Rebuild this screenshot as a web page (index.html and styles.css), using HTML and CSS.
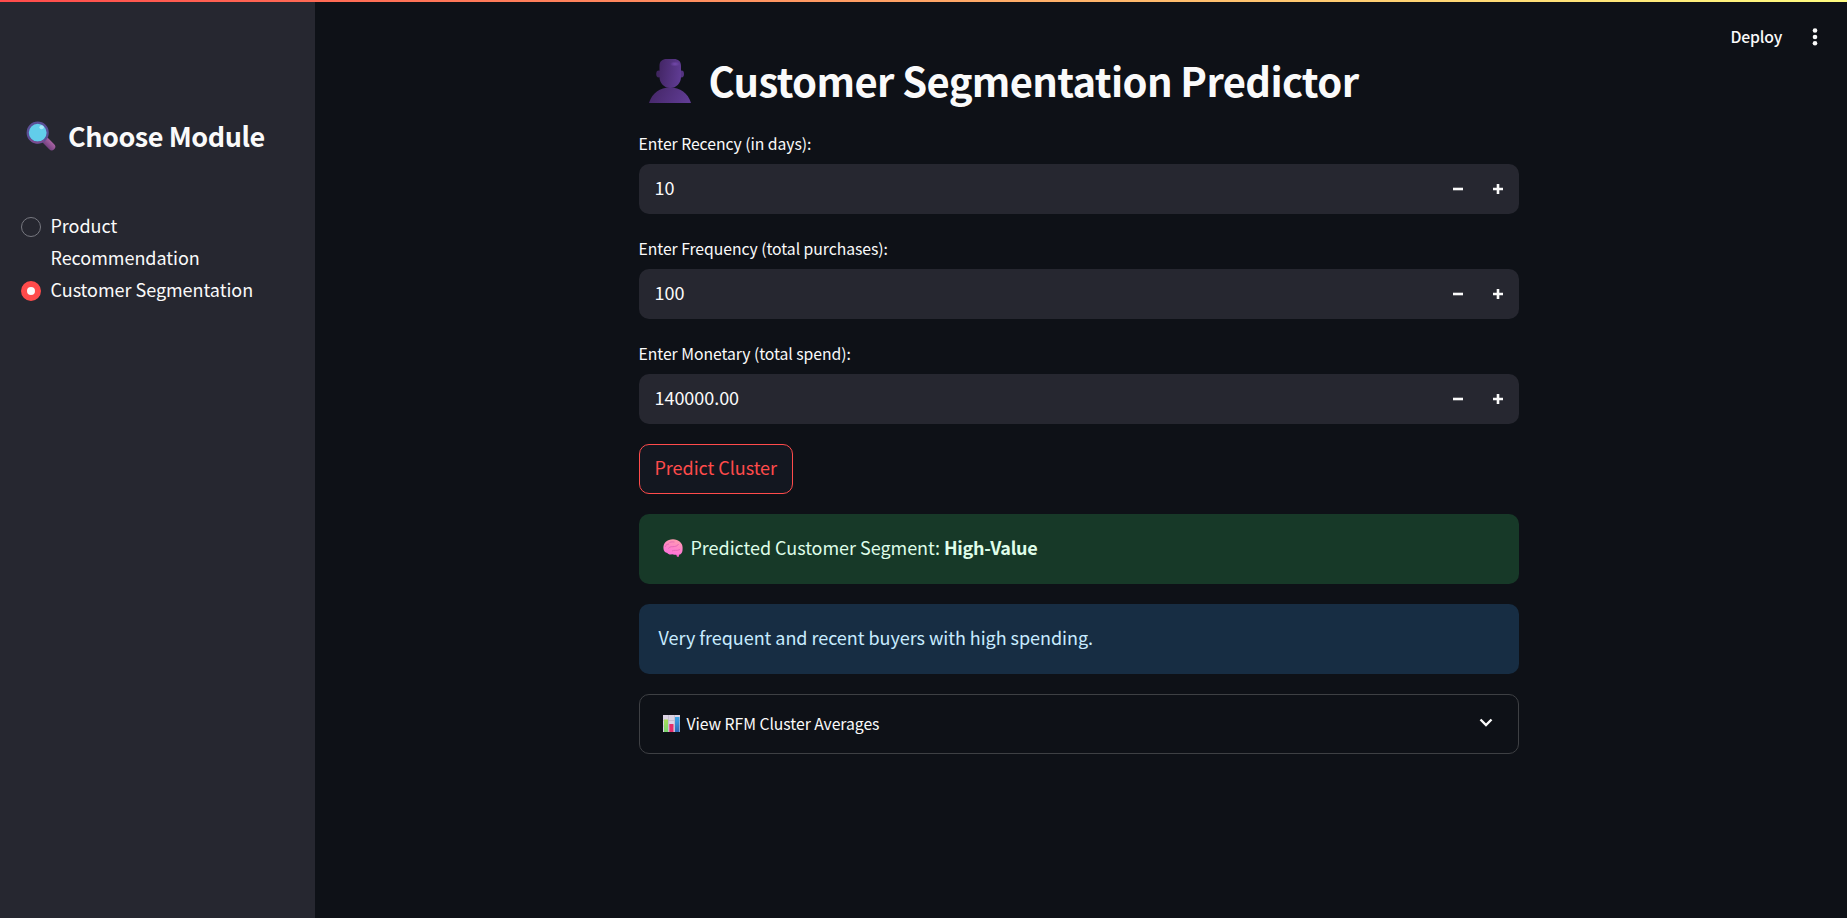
FILE: index.html
```html
<!DOCTYPE html>
<html lang="en">
<head>
<meta charset="utf-8">
<title>Customer Segmentation Predictor</title>
<link rel="stylesheet" href="styles.css">
</head>
<body>
<div class="decoration"></div>
<div class="app">
  <aside class="sidebar">
    <h2 class="side-title">
      <svg class="lens" viewBox="0 0 30 30"><defs><linearGradient id="handle" x1="0" y1="1" x2="1" y2="0"><stop offset="0" stop-color="#6d3c7c"/><stop offset="1" stop-color="#b068a8"/></linearGradient></defs><path d="M19.500 19.500l6.200 6.200" stroke="url(#handle)" stroke-width="7" stroke-linecap="round"/><circle cx="11.700" cy="11.700" r="10" fill="#62cdea" stroke="#5b4f96" stroke-width="2.200"/><path d="M4 18a10 10 0 0 0 14 1.400" fill="none" stroke="#7d4b8d" stroke-width="1.800"/><ellipse cx="15.600" cy="6.300" rx="2.200" ry="2" fill="#a8e7f8"/></svg>
      <span class="side-text">Choose Module</span>
    </h2>
    <div class="radio"><span class="dot"></span><span class="opt">Product<br>Recommendation</span></div>
    <div class="radio"><span class="dot on"></span><span class="opt">Customer Segmentation</span></div>
  </aside>
  <main class="main">
    <header class="toolbar">
      <span class="deploy">Deploy</span>
      <svg class="kebab" viewBox="0 0 6 18"><circle cx="3" cy="2.500" r="2.300"/><circle cx="3" cy="9" r="2.300"/><circle cx="3" cy="15.300" r="2.300"/></svg>
    </header>
    <section class="content">
      <h1 class="title">
        <svg class="bust" viewBox="0 0 44 46"><defs><linearGradient id="skin" x1="0" y1=".4" x2="1" y2=".6"><stop offset="0" stop-color="#452768"/><stop offset="1" stop-color="#603c94"/></linearGradient><radialGradient id="shine"><stop offset="0" stop-color="#7449ad"/><stop offset="1" stop-color="#7449ad" stop-opacity="0"/></radialGradient></defs><ellipse cx="10.700" cy="16" rx="2.500" ry="3.400" fill="#402660"/><ellipse cx="33.500" cy="16" rx="2.500" ry="3.400" fill="#543381"/><path d="M1 45C4 35 12 29.500 22 29.500S40 35 43 45z" fill="url(#skin)"/><path d="M11.500 8c0-5 3-7 7-7h7.500c4 0 7 2 7 7v11c0 6-4.500 11-10.700 11s-10.800-5-10.800-11z" fill="url(#skin)"/><ellipse cx="27" cy="6" rx="5" ry="2.500" fill="url(#shine)"/></svg>
        <span class="title-text">Customer Segmentation Predictor</span>
      </h1>
      <div class="field">
        <label class="label">Enter Recency (in days):</label>
        <div class="input"><span class="value">10</span><svg class="step" viewBox="0 0 10 10"><path d="M0 3.700h10v2.600H0z"/></svg><svg class="step" viewBox="0 0 10 10"><path d="M0 3.700h3.700V0h2.600v3.700H10v2.600H6.300V10H3.700V6.300H0z"/></svg></div>
      </div>
      <div class="field">
        <label class="label">Enter Frequency (total purchases):</label>
        <div class="input"><span class="value">100</span><svg class="step" viewBox="0 0 10 10"><path d="M0 3.700h10v2.600H0z"/></svg><svg class="step" viewBox="0 0 10 10"><path d="M0 3.700h3.700V0h2.600v3.700H10v2.600H6.300V10H3.700V6.300H0z"/></svg></div>
      </div>
      <div class="field">
        <label class="label">Enter Monetary (total spend):</label>
        <div class="input"><span class="value">140000.00</span><svg class="step" viewBox="0 0 10 10"><path d="M0 3.700h10v2.600H0z"/></svg><svg class="step" viewBox="0 0 10 10"><path d="M0 3.700h3.700V0h2.600v3.700H10v2.600H6.300V10H3.700V6.300H0z"/></svg></div>
      </div>
      <button class="predict">Predict Cluster</button>
      <div class="alert success">
        <svg class="brain" viewBox="0 0 20 18"><defs><linearGradient id="lobe" x1=".7" y1="0" x2=".4" y2="1"><stop offset="0" stop-color="#ff9daf"/><stop offset="1" stop-color="#ff70dc"/></linearGradient></defs><path d="M12.500 13.500l1.500 4.300h1.800l.8-4.300z" fill="#f062c4"/><path d="M.4 9C.2 4 4 .3 10 .3c5.500 0 9.600 3.700 9.600 8.200 0 2.200 0 4-.8 5.300-.7 1.300-2 2-3.300 1.900-2 .3-4.500 0-6.500-.5-2 .5-4 0-4.600-1.300C2 13.900.5 12 .4 9z" fill="url(#lobe)"/><path d="M2 8c1-2.500 2.500-3 4-3M6.500 3.500c2-1 3.500-.5 5-.5M5.500 9.500c1-2.500 4-1.500 6-2s3-.5 4-2.500M9 12c2-1.500 5 .3 8-1.500" fill="none" stroke="#e060b4" stroke-width=".8"/></svg>
        <span class="alert-text">Predicted Customer Segment: </span><strong class="alert-text segment">High-Value</strong>
      </div>
      <div class="alert info"><span class="alert-text">Very frequent and recent buyers with high spending.</span></div>
      <div class="expander">
        <svg class="chart" viewBox="0 0 17 17"><defs><linearGradient id="bar1" x1="0" y1="0" x2="0" y2="1"><stop offset="0" stop-color="#a9dc58"/><stop offset="1" stop-color="#76d46d"/></linearGradient><linearGradient id="bar3" x1="0" y1="0" x2="0" y2="1"><stop offset="0" stop-color="#3da7e8"/><stop offset="1" stop-color="#2c67b8"/></linearGradient></defs><path fill="#dcd3e4" d="M0 0h17v17H0z"/><path d="M0 5.500h17M0 11h17M5.500 0v17M11.500 0v17" stroke="#c3bacd" stroke-width=".8"/><path fill="url(#bar1)" d="M1 4.500h4V17H1z"/><path fill="#e52d6b" d="M6.300 9h4.200v8H6.300z"/><path fill="url(#bar3)" d="M12 2h4.500v15H12z"/></svg>
        <span class="expander-text">View RFM Cluster Averages</span>
        <svg class="chevron" viewBox="0 0 14 9"><path d="M1.500 1.500L7 7l5.500-5.500" fill="none" stroke="#fafafa" stroke-width="2.400"/></svg>
      </div>
    </section>
  </main>
</div>
</body>
</html>
```
FILE: styles.css
```css
* { box-sizing: border-box; }
body { margin: 0; background: #0e1117; color: #fafafa; font: 18px/32px "Noto Sans CJK SC", "Noto Sans", sans-serif; letter-spacing: -.04px; height: 918px; overflow: hidden; }
h1, h2 { margin: 0; }
svg { display: block; flex: none; }
span, strong, label { white-space: nowrap; }
.decoration { position: absolute; top: 0; left: 0; width: 100%; height: 2px; z-index: 2; background: linear-gradient(90deg, #ff4b4b, #fffd80); }
.app { display: flex; height: 918px; }
.sidebar { width: 315px; background: #262730; padding: 115px 20px 0 21px; }
.side-title { display: flex; align-items: flex-start; height: 40px; margin-bottom: 55px; font-size: 27px; line-height: 40px; letter-spacing: -.45px; }
.lens { width: 30px; height: 30px; margin: 6px 12px 0 5px; }
.side-text { padding-top: 1px; }
.radio { display: flex; align-items: flex-start; gap: 9.500px; }
.opt { margin-top: -1px; margin-bottom: 1px; }
.dot { width: 20px; height: 20px; margin-top: 7px; border: 1px solid #777880; border-radius: 50%; }
.dot.on { border: 6.500px solid #ff4b4b; background: #fafafa; }
.main { flex: 1; }
.toolbar { height: 55px; display: flex; justify-content: flex-end; align-items: flex-start; padding: 21px 29px 0 0; gap: 30px; }
.deploy { font-size: 15.750px; line-height: 32px; font-weight: 500; letter-spacing: -.2px; }
.kebab { width: 6px; height: 18px; margin-top: 6.500px; fill: #fafafa; }
.content { width: 880px; margin-left: 324px; }
.title { display: flex; height: 75px; margin-bottom: 3px; font-size: 40px; line-height: 56px; letter-spacing: -.65px; }
.bust { width: 44px; height: 46px; margin: 3px 17px 0 8.500px; }
.title-text { margin-top: -3px; }
.field { margin-bottom: 20px; }
.label { display: block; font-size: 15.750px; line-height: 20px; height: 31px; padding-top: 1px; margin-left: -.5px; letter-spacing: -.05px; }
.field + .field { margin-top: 24px; }
.input { height: 50px; border-radius: 10px; background: #262730; display: flex; align-items: center; padding: 0 16px 0 15.500px; gap: 30px; }
.value { flex: 1; margin-top: -5px; }
.step { width: 10px; height: 10px; fill: #fafafa; }
.predict { display: flex; align-items: center; width: 154px; height: 50px; padding: 0 14.500px 5px; margin: 0 0 20px; border: 1px solid #ff4b4b; border-radius: 10px; background: #131720; color: #ff4b4b; font: inherit; letter-spacing: inherit; white-space: nowrap; }
.alert { height: 70px; margin-bottom: 20px; border-radius: 10px; display: flex; align-items: center; padding: 0 19.500px 5px; }
.success { background: #173928; color: #dffde9; }
.info { background: #172d43; color: #c7ebff; }
.alert-text { white-space: pre; }
.segment { letter-spacing: -.3px; }
.brain { width: 20px; height: 18px; margin: 2px 8px 0 4px; }
.expander { height: 60px; border: 1px solid #3e4044; border-radius: 10px; display: flex; align-items: center; padding: 0 25.500px 0 23px; font-size: 15.750px; }
.chart { width: 17px; height: 17px; margin: -1px 6.500px 0 0; }
.expander-text { flex: 1; letter-spacing: -.05px; }
.chevron { width: 14px; height: 9px; margin-top: -3px; }
```
